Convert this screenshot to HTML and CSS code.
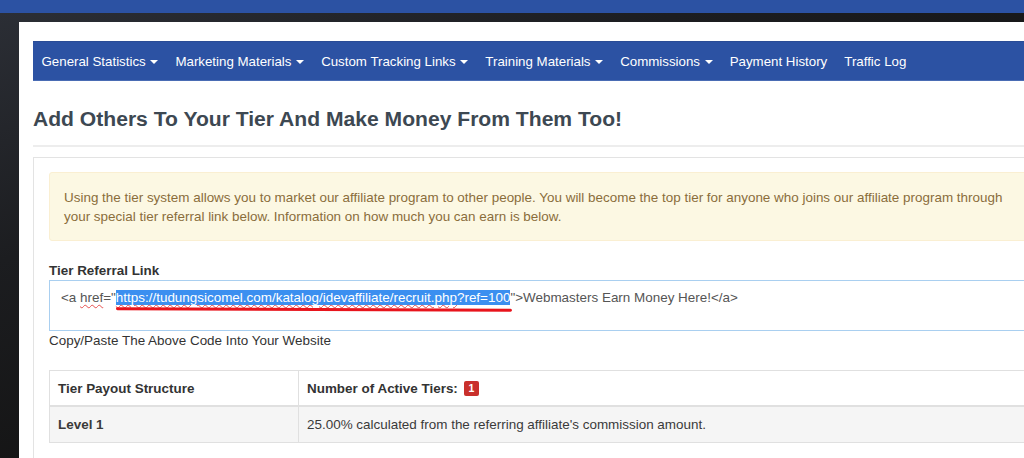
FILE: index.html
```html
<!DOCTYPE html>
<html>
<head>
    <title>Tier Referral Link</title>
    <link rel="stylesheet" href="styles.css">
</head>
<body>
    <div class="topbar"></div>
    <div class="backdrop">
        <div class="page">
            <ul class="navbar">
                <li class="nav-item">General Statistics <span class="caret"></span></li>
                <li class="nav-item">Marketing Materials <span class="caret"></span></li>
                <li class="nav-item">Custom Tracking Links <span class="caret"></span></li>
                <li class="nav-item">Training Materials <span class="caret"></span></li>
                <li class="nav-item">Commissions <span class="caret"></span></li>
                <li class="nav-item">Payment History</li>
                <li class="nav-item">Traffic Log</li>
            </ul>

            <h1 class="page-title">Add Others To Your Tier And Make Money From Them Too!</h1>
            <hr class="divider">

            <div class="panel">
                <div class="alert">
                    Using the tier system allows you to market our affiliate program to other people. You will become the top tier for anyone who joins our affiliate program through your special tier referral link below. Information on how much you can earn is below.
                </div>

                <label class="field-label">Tier Referral Link</label>
                <div class="code-box">&lt;a <span class="typo">href</span>="<span class="selected"><span class="typo">https://tudungsicomel.com/katalog/idevaffiliate/recruit.php</span>?ref=100</span>"&gt;Webmasters Earn Money Here!&lt;/a&gt;</div>
                <p class="help-text">Copy/Paste The Above Code Into Your Website</p>

                <table class="tier-table">
                    <thead>
                        <tr>
                            <th class="col-level">Tier Payout Structure</th>
                            <th>Number of Active Tiers: <span class="badge">1</span></th>
                        </tr>
                    </thead>
                    <tbody>
                        <tr>
                            <td class="col-level"><strong>Level 1</strong></td>
                            <td>25.00% calculated from the referring affiliate's commission amount.</td>
                        </tr>
                    </tbody>
                </table>
            </div>
        </div>
    </div>
</body>
</html>
```

FILE: styles.css
```css
body {
    margin: 0;
    background: #151515;
    font-family: "Liberation Sans", Arial, sans-serif;
    font-size: 13.45px;
    line-height: 19px;
    color: #333;
    overflow: hidden;
}

.topbar {
    height: 13px;
    background-color: #2c52a3;
}

.backdrop {
    padding: 9px 0 0 19px;
    height: 445px;
    background: linear-gradient(160deg, #2b2e35 0%, #1c1d20 30%, #141414 60%, #121212 100%);
}

.page {
    background: #fff;
    width: 1023px;
    height: 460px;
    padding: 19px 14px 0 14px;
}

.navbar {
    display: flex;
    align-items: center;
    list-style: none;
    margin: 0;
    padding: 0;
    height: 38px;
    background-color: #2c52a3;
    border-top: 1px solid #2a4c96;
    border-bottom: 1px solid #4a6cb4;
    font-size: 13.3px;
}

.nav-item {
    padding: 0 8.5px;
    color: #fff;
    white-space: nowrap;
}

.caret {
    display: inline-block;
    width: 0;
    height: 0;
    margin-left: 1px;
    vertical-align: middle;
    border-top: 4px solid #fff;
    border-left: 4px solid transparent;
    border-right: 4px solid transparent;
}

.page-title {
    margin: 26px 0 15px;
    font-size: 21.1px;
    line-height: 23px;
    font-weight: bold;
    color: #3d4852;
}

.divider {
    margin: 0 0 10px;
    border: 0;
    border-top: 2px solid #ededed;
}

.panel {
    border: 1px solid #e3e3e3;
    padding: 14px 15px 40px 15px;
}

.alert {
    padding: 15px 15px 14px 14px;
    margin-bottom: 20px;
    background-color: #fcf8e3;
    border: 1px solid #faefd2;
    border-radius: 3px;
    color: #8a6d3b;
}

.field-label {
    display: block;
    font-weight: bold;
}

.code-box {
    height: 51px;
    box-sizing: border-box;
    padding: 7px 11px;
    border: 1px solid #a9cff0;
    color: #555;
    white-space: nowrap;
}

.typo {
    text-decoration: underline wavy #e55050;
    text-decoration-thickness: 1px;
    text-underline-offset: 2px;
}

.selected {
    position: relative;
    background-color: #3b8ff0;
    color: #fff;
}

/* hand drawn red mark under the link */
.selected::after {
    content: "";
    position: absolute;
    left: 0;
    right: -1px;
    bottom: -5px;
    height: 2.5px;
    background: #e8141c;
    border-radius: 2px;
    transform: rotate(0.25deg);
}

.help-text {
    margin: 0 0 20px;
    color: #333;
}

.tier-table {
    width: 100%;
    border-collapse: collapse;
    border: 1px solid #e0e0e0;
}

.tier-table th,
.tier-table td {
    text-align: left;
    padding: 7.5px 8px;
    border-left: 1px solid #e0e0e0;
}

.tier-table th {
    border-bottom: 2px solid #e0e0e0;
}

.tier-table td {
    padding: 8px;
    background-color: #f5f5f5;
    color: #3a3a3a;
}

.col-level {
    width: 232px;
}

.badge {
    display: inline-block;
    margin-left: 2px;
    padding: 0 5px;
    height: 15px;
    line-height: 15px;
    font-size: 10.5px;
    font-weight: bold;
    color: #fff;
    background-color: #c9302c;
    border-radius: 2px;
    vertical-align: 1px;
}
```
